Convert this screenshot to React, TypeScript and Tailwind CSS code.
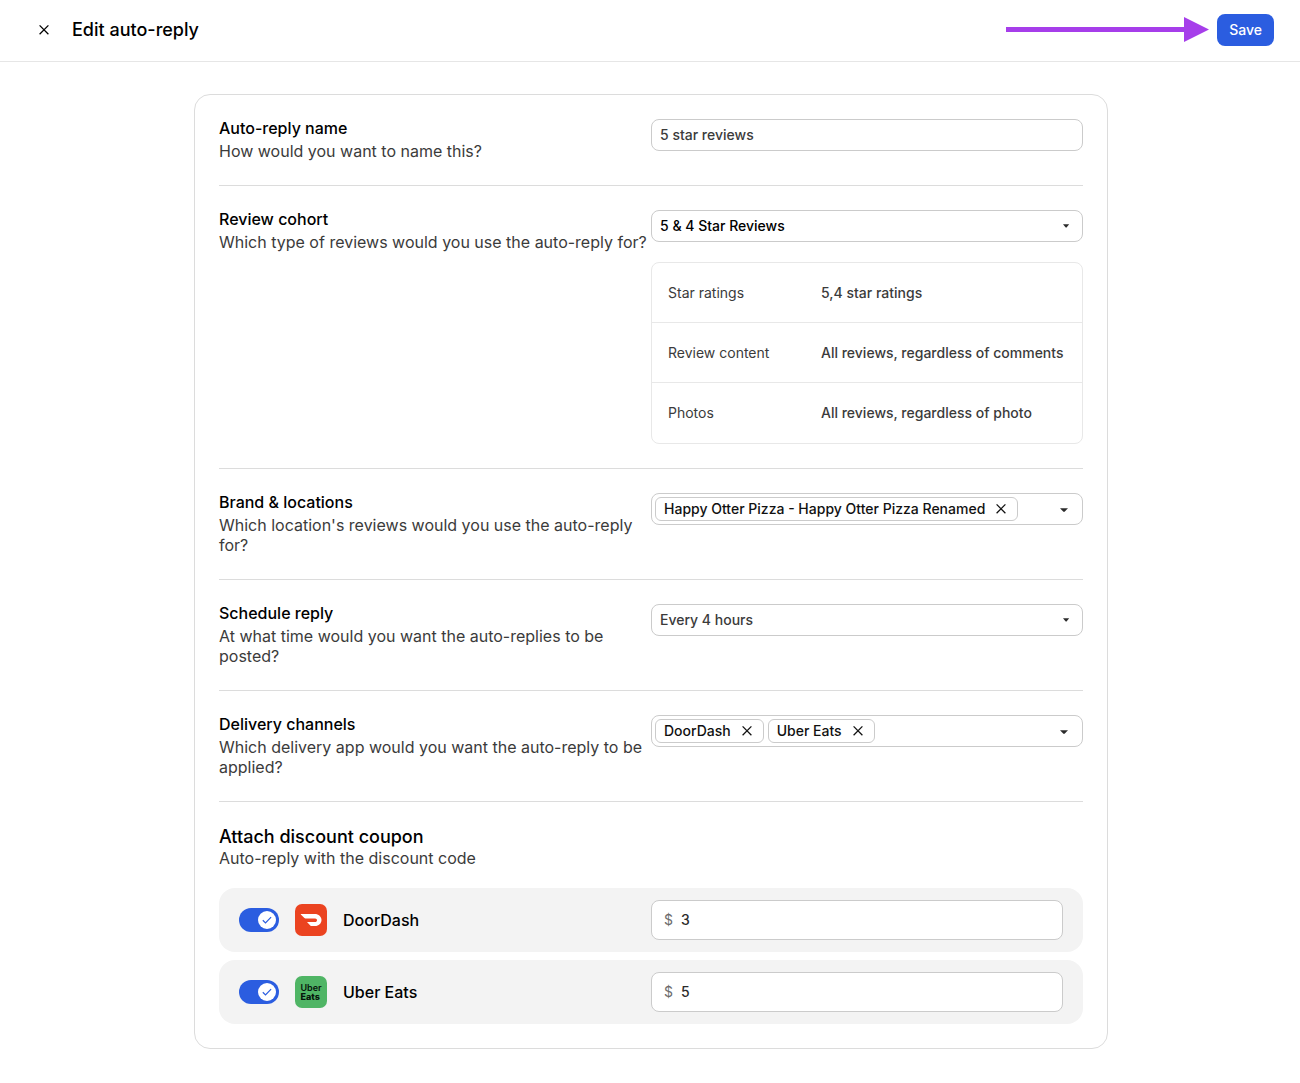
import { useState } from 'react'
import type { ReactNode } from 'react'

const cohortDetails = [
  { label: 'Star ratings', value: '5,4 star ratings' },
  { label: 'Review content', value: 'All reviews, regardless of comments' },
  { label: 'Photos', value: 'All reviews, regardless of photo' },
]

function CloseIcon() {
  return (
    <svg className="w-4 h-4" viewBox="0 0 16 16" fill="none" stroke="currentColor" strokeWidth="1.25" aria-hidden="true">
      <path d="M3.6 3.4l8.800 8.800M12.4 3.4l-8.800 8.800" />
    </svg>
  )
}

function DoorDashLogo() {
  return (
    <svg className="w-8 h-8" viewBox="0 0 32 32" aria-hidden="true">
      <rect width="32" height="32" rx="7" fill="#eb4320" />
      <path
        d="M6 10h13.700c4 0 6.800 2.700 6.800 6.100s-2.800 6-6.400 6h-3.600c-.4 0-.7-.1-1-.4l-3.500-3.700h8.200c1 0 1.800-.8 1.800-1.800s-.8-1.800-1.800-1.800H10.400c-.4 0-.7-.1-1-.4L5.800 10.500c-.2-.2-.1-.5.2-.5z"
        fill="#fff"
      />
    </svg>
  )
}

function UberEatsLogo() {
  return (
    <svg className="w-8 h-8" viewBox="0 0 32 32" aria-hidden="true">
      <rect width="32" height="32" rx="7" fill="#4fb565" />
      <g fill="#06140b" fontFamily="Inter, sans-serif" fontSize="9">
        <text x="5.500" y="15" fontWeight="600">Uber</text>
        <text x="5.500" y="23.500" fontWeight="800">Eats</text>
      </g>
    </svg>
  )
}

type FieldRowProps = {
  title: string
  description: string
  htmlFor?: string
  children: ReactNode
}

function FieldRow({ title, description, htmlFor, children }: FieldRowProps) {
  return (
    <div className="grid grid-cols-2 py-6 border-b border-[#dcdcdc] first:pt-0">
      <div>
        <label htmlFor={htmlFor} className="block mb-1 text-base/[18px] font-medium text-black">
          {title}
        </label>
        <p className="text-base/5 text-[#3b3b3b]">{description}</p>
      </div>
      <div>{children}</div>
    </div>
  )
}

type SelectFieldProps = {
  id: string
  options: string[]
  className: string
}

function SelectField({ id, options, className }: SelectFieldProps) {
  return (
    <div className="relative">
      <select
        id={id}
        className={`block w-full h-8 px-2 appearance-none rounded-lg border border-[#cbcbcb] bg-white text-sm font-medium ${className}`}
      >
        {options.map((option) => (
          <option key={option}>{option}</option>
        ))}
      </select>
      <svg className="absolute right-3 top-3 w-2.5 h-2 pointer-events-none" viewBox="0 0 10 8" aria-hidden="true">
        <path d="M2 2.200h6.200L5.700 5.300a.8.8 0 0 1-1.200 0z" fill="#2b2b2b" />
      </svg>
    </div>
  )
}

type TagFieldProps = {
  id: string
  label: string
  initial: string[]
}

function TagField({ id, label, initial }: TagFieldProps) {
  const [tags, setTags] = useState(initial)

  return (
    <div className="flex items-center justify-between min-h-8 pl-[3px] pr-2 rounded-lg border border-[#cbcbcb]">
      <div className="flex flex-wrap gap-1">
        {tags.map((tag) => (
          <span
            key={tag}
            className="flex items-center gap-2 h-6 px-2 rounded-md border border-[#cbcbcb] text-sm font-medium text-[#111]"
          >
            {tag}
            <button type="button" aria-label={`Remove ${tag}`} onClick={() => setTags(tags.filter((t) => t !== tag))}>
              <CloseIcon />
            </button>
          </span>
        ))}
      </div>
      <button type="button" id={id} aria-label={`Open ${label}`} className="p-1">
        <svg className="w-3 h-3" viewBox="0 0 12 12" aria-hidden="true">
          <path d="M2 5.200h8L6.800 8.600a1.100 1.100 0 0 1-1.600 0z" fill="#2b2b2b" />
        </svg>
      </button>
    </div>
  )
}

type CouponRowProps = {
  id: string
  name: string
  amount: string
  logo: ReactNode
}

function CouponRow({ id, name, amount, logo }: CouponRowProps) {
  return (
    <div className="grid grid-cols-2 items-center px-5 py-3 rounded-2xl bg-[#f3f3f3]">
      <label className="flex items-center gap-4 text-base font-medium text-black">
        <input type="checkbox" role="switch" defaultChecked className="peer sr-only" />
        <span className="flex items-center w-10 h-6 px-[3px] rounded-full bg-gray-300 peer-checked:bg-[#2b5de0] peer-checked:justify-end">
          <span className="flex items-center justify-center w-[18px] h-[18px] rounded-full bg-white">
            <svg className="w-3 h-3" viewBox="0 0 12 12" fill="none" stroke="#2b5de0" strokeWidth="1.200" aria-hidden="true">
              <path d="M1.800 6.300l2.700 2.600 5.600-5.800" />
            </svg>
          </span>
        </span>
        {logo}
        {name}
      </label>
      <div className="flex items-center gap-2 h-10 px-3 rounded-lg border border-[#cbcbcb] bg-white text-sm">
        <label htmlFor={id} aria-label={`${name} discount in dollars`} className="text-[#6b6b6b]">
          $
        </label>
        <input id={id} defaultValue={amount} className="w-full min-w-0 font-medium text-[#2b2b2b] outline-none" />
      </div>
    </div>
  )
}

export default function App() {
  return (
    <div className="min-h-screen bg-white font-[Inter,sans-serif]">
      {/* Header */}
      <header className="flex items-center justify-between h-[62px] pb-px pl-9 pr-[26px] border-b border-[#e6e6e6]">
        <div className="flex items-center gap-5">
          <button type="button" aria-label="Close" className="text-black">
            <CloseIcon />
          </button>
          <h1 className="text-lg font-medium text-black">Edit auto-reply</h1>
        </div>
        <div className="flex items-center gap-2">
          <svg className="w-[203px] h-[26px]" viewBox="0 0 203 26" fill="#a63eea" aria-hidden="true">
            <path d="M0 10h178V0l25 12.500-25 12.500v-10H0z" />
          </svg>
          <button type="button" className="h-8 px-3 rounded-lg bg-[#2b5de0] text-sm font-medium text-white">
            Save
          </button>
        </div>
      </header>

      {/* Form */}
      <main className="pl-[26px] pr-6 pt-8 pb-8">
        <form className="max-w-[914px] mx-auto p-6 rounded-2xl border border-[#dcdcdc]">
          <FieldRow title="Auto-reply name" description="How would you want to name this?" htmlFor="reply-name">
            <input
              id="reply-name"
              defaultValue="5 star reviews"
              className="block w-full h-8 px-2 pb-0.5 rounded-lg border border-[#cbcbcb] text-sm font-medium text-[#3b3b3b]"
            />
          </FieldRow>

          <FieldRow
            title="Review cohort"
            description="Which type of reviews would you use the auto-reply for?"
            htmlFor="cohort"
          >
            <SelectField
              id="cohort"
              options={['5 & 4 Star Reviews', '3 Star Reviews', '2 & 1 Star Reviews']}
              className="text-black"
            />
            <div className="mt-5 rounded-lg border border-[#e8e8e8]">
              <table className="w-full border-separate border-spacing-0 text-sm text-left text-[#3b3b3b]">
                <tbody>
                  {cohortDetails.map((detail) => (
                    <tr key={detail.label} className="group h-[60px]">
                      <th scope="row" className="w-[169px] pl-4 font-normal border-b border-[#e8e8e8] group-last:border-b-0">
                        {detail.label}
                      </th>
                      <td className="font-medium border-b border-[#e8e8e8] group-last:border-b-0">{detail.value}</td>
                    </tr>
                  ))}
                </tbody>
              </table>
            </div>
          </FieldRow>

          <FieldRow
            title="Brand & locations"
            description="Which location's reviews would you use the auto-reply for?"
            htmlFor="locations"
          >
            <TagField id="locations" label="brand and locations" initial={['Happy Otter Pizza - Happy Otter Pizza Renamed']} />
          </FieldRow>

          <FieldRow
            title="Schedule reply"
            description="At what time would you want the auto-replies to be posted?"
            htmlFor="schedule"
          >
            <SelectField
              id="schedule"
              options={['Every 4 hours', 'Every 8 hours', 'Every 24 hours']}
              className="text-[#3b3b3b]"
            />
          </FieldRow>

          <FieldRow
            title="Delivery channels"
            description="Which delivery app would you want the auto-reply to be applied?"
            htmlFor="channels"
          >
            <TagField id="channels" label="delivery channels" initial={['DoorDash', 'Uber Eats']} />
          </FieldRow>

          {/* Coupons */}
          <section className="pt-6">
            <h2 className="text-lg/[22px] font-medium text-black">Attach discount coupon</h2>
            <p className="text-base/5 text-[#3b3b3b]">Auto-reply with the discount code</p>
            <div className="flex flex-col gap-2 mt-5">
              <CouponRow id="doordash-amount" name="DoorDash" amount="3" logo={<DoorDashLogo />} />
              <CouponRow id="ubereats-amount" name="Uber Eats" amount="5" logo={<UberEatsLogo />} />
            </div>
          </section>
        </form>
      </main>
    </div>
  )
}
